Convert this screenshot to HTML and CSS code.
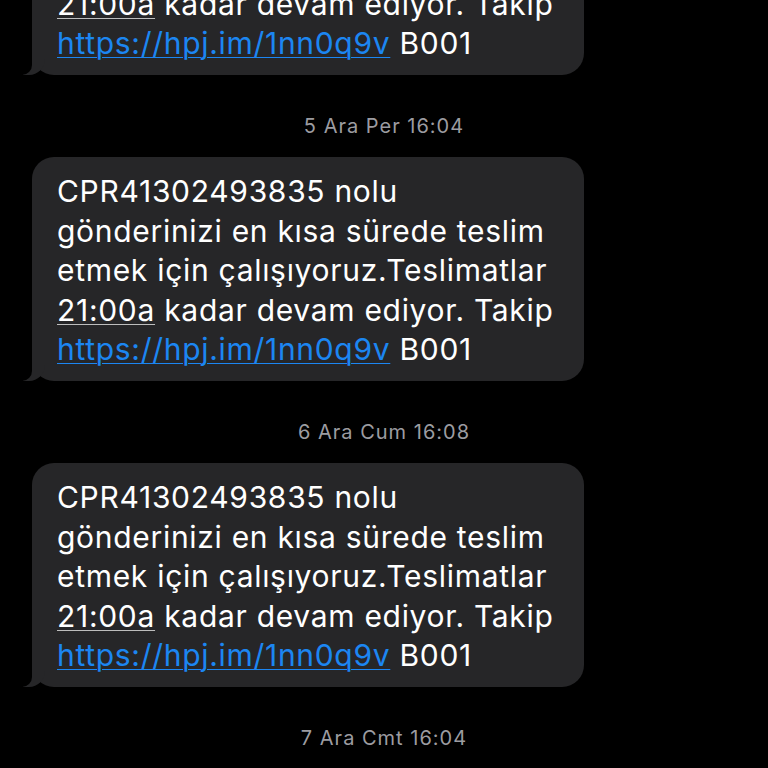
FILE: index.html
```html
<!DOCTYPE html>
<html lang="tr">
<head>
    <meta charset="UTF-8">
    <meta name="viewport" content="width=device-width, initial-scale=1.0">
    <title>Mesajlar</title>
    <link rel="stylesheet" href="styles.css">
</head>
<body>
    <main class="thread">
        <div class="message">
            <div class="bubble">
                CPR41302493835 nolu<br>
                gönderinizi en kısa sürede teslim<br>
                etmek için çalışıyoruz.Teslimatlar<br>
                <span class="date">21:00a</span> kadar devam ediyor. Takip<br>
                <a href="#">https://hpj.im/1nn0q9v</a> B001
            </div>
        </div>

        <div class="timestamp">5 Ara Per 16:04</div>

        <div class="message">
            <div class="bubble">
                CPR41302493835 nolu<br>
                gönderinizi en kısa sürede teslim<br>
                etmek için çalışıyoruz.Teslimatlar<br>
                <span class="date">21:00a</span> kadar devam ediyor. Takip<br>
                <a href="#">https://hpj.im/1nn0q9v</a> B001
            </div>
        </div>

        <div class="timestamp">6 Ara Cum 16:08</div>

        <div class="message">
            <div class="bubble">
                CPR41302493835 nolu<br>
                gönderinizi en kısa sürede teslim<br>
                etmek için çalışıyoruz.Teslimatlar<br>
                <span class="date">21:00a</span> kadar devam ediyor. Takip<br>
                <a href="#">https://hpj.im/1nn0q9v</a> B001
            </div>
        </div>

        <div class="timestamp">7 Ara Cmt 16:04</div>
    </main>
</body>
</html>
```

FILE: styles.css
```css
body, html {
    margin: 0;
    padding: 0;
    background-color: #000;
    font-family: 'Inter', 'Noto Sans', sans-serif;
    overflow: hidden;
}

.thread {
    margin-top: -149px;
    display: flex;
    flex-direction: column;
}

.message {
    padding-left: 32px;
}

.bubble {
    position: relative;
    width: 552px;
    height: 224px;
    box-sizing: border-box;
    padding: 15px 10px 0 25px;
    background-color: #262628;
    border-radius: 22px;
    color: #fff;
    font-size: 30px;
    line-height: 39.5px;
    letter-spacing: 0.7px;
}

/* little tail at the bottom left */
.bubble::before {
    content: "";
    position: absolute;
    bottom: 0;
    left: -9px;
    width: 22px;
    height: 22px;
    background-color: #262628;
    border-bottom-right-radius: 16px;
}

.bubble::after {
    content: "";
    position: absolute;
    bottom: 0;
    left: -12px;
    width: 12px;
    height: 22px;
    background-color: #000;
    border-bottom-right-radius: 10px;
}

.bubble a {
    color: #1c86f2;
    text-decoration: underline;
    text-underline-offset: 3px;
    text-decoration-thickness: 1px;
}

.date {
    text-decoration: underline;
    text-decoration-color: #bdbdbd;
    text-underline-offset: 3px;
    text-decoration-thickness: 1px;
}

.timestamp {
    text-align: center;
    color: #9c9ca1;
    font-size: 20px;
    line-height: 24px;
    letter-spacing: 1px;
    margin: 39px 0 19px;
}
```
